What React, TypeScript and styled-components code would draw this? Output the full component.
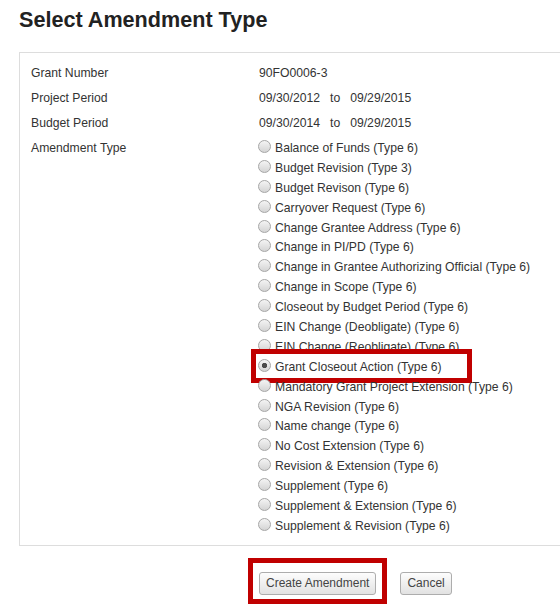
import React from 'react';
import styled, { createGlobalStyle } from 'styled-components';

const GlobalStyle = createGlobalStyle`
  body {
    margin: 0;
    background: #fff;
    font-family: 'Liberation Sans', Arial, sans-serif;
    font-size: 12.2px;
    color: #333;
    overflow: hidden;
  }
`;

const Page = styled.div`
  padding-left: 19px;
`;

const Title = styled.h1`
  margin: 8px 0 20px;
  font-size: 21.6px;
  line-height: 24px;
  font-weight: bold;
  color: #222;
`;

const Panel = styled.div`
  width: 560px;
  border: 1px solid #ddd;
  padding: 8px 0 9px 11px;
  box-sizing: border-box;
  display: grid;
  grid-template-columns: 228px 1fr;
`;

const Label = styled.div<{ $list?: boolean }>`
  line-height: ${(p) => (p.$list ? '20px' : '25px')};
  padding-top: ${(p) => (p.$list ? '2px' : '0')};
`;

const Value = styled.div`
  line-height: 25px;
`;

const To = styled.span`
  margin: 0 10px;
`;

const RadioList = styled.div`
  padding-top: 2px;
  display: flex;
  flex-direction: column;
`;

const Item = styled.label<{ $marked?: boolean }>`
  position: relative;
  display: flex;
  align-items: center;
  height: 19.9px;
  margin-left: -1px;
  white-space: nowrap;

  ${(p) =>
    p.$marked &&
    `
    &::after {
      content: '';
      position: absolute;
      left: -7px;
      top: -8px;
      width: 221px;
      height: 34px;
      box-sizing: border-box;
      border: 5px solid #c00000;
      pointer-events: none;
    }
  `}
`;

const Radio = styled.input`
  appearance: none;
  width: 13px;
  height: 13px;
  margin: -3px 4px 0 0;
  border-radius: 50%;
  border: 1px solid #a6a6a6;
  box-sizing: border-box;
  background: linear-gradient(#f4f4f4, #d4d4d4);

  &:checked {
    background: radial-gradient(circle, #4a4a4a 0 2.3px, transparent 3px),
      linear-gradient(#f4f4f4, #d4d4d4);
  }
`;

const Actions = styled.div`
  display: flex;
  align-items: flex-start;
  padding-left: 229px;
  margin-top: 12px;
`;

const Mark = styled.span`
  display: inline-block;
  border: 5px solid #c00000;
  padding: 9px 6px 4px;
`;

const Button = styled.button<{ $gap?: number }>`
  height: 23px;
  padding: 0 6px;
  margin: ${(p) => (p.$gap ? `14px 0 0 ${p.$gap}px` : '0')};
  font-family: 'Liberation Sans', Arial, sans-serif;
  font-size: 12px;
  color: #444;
  border: 1px solid #adadad;
  border-radius: 3px;
  background: linear-gradient(#fdfdfd, #e2e2e2);
  display: block;
`;

const types = [
  'Balance of Funds (Type 6)',
  'Budget Revision (Type 3)',
  'Budget Revison (Type 6)',
  'Carryover Request (Type 6)',
  'Change Grantee Address (Type 6)',
  'Change in PI/PD (Type 6)',
  'Change in Grantee Authorizing Official (Type 6)',
  'Change in Scope (Type 6)',
  'Closeout by Budget Period (Type 6)',
  'EIN Change (Deobligate) (Type 6)',
  'EIN Change (Reobligate) (Type 6)',
  'Grant Closeout Action (Type 6)',
  'Mandatory Grant Project Extension (Type 6)',
  'NGA Revision (Type 6)',
  'Name change (Type 6)',
  'No Cost Extension (Type 6)',
  'Revision & Extension (Type 6)',
  'Supplement (Type 6)',
  'Supplement & Extension (Type 6)',
  'Supplement & Revision (Type 6)',
];

const App = () => {
  const selected = 'Grant Closeout Action (Type 6)';

  return (
    <Page>
      <GlobalStyle />
      <Title>Select Amendment Type</Title>
      <Panel>
        <Label>Grant Number</Label>
        <Value>90FO0006-3</Value>
        <Label>Project Period</Label>
        <Value>
          09/30/2012<To>to</To>09/29/2015
        </Value>
        <Label>Budget Period</Label>
        <Value>
          09/30/2014<To>to</To>09/29/2015
        </Value>
        <Label $list>Amendment Type</Label>
        <RadioList>
          {types.map((t) => (
            <Item key={t} $marked={t === selected}>
              <Radio
                type='radio'
                name='amendment'
                defaultChecked={t === selected}
              />
              {t}
            </Item>
          ))}
        </RadioList>
      </Panel>
      <Actions>
        <Mark>
          <Button>Create Amendment</Button>
        </Mark>
        <Button $gap={13}>Cancel</Button>
      </Actions>
    </Page>
  );
};

export default App;
